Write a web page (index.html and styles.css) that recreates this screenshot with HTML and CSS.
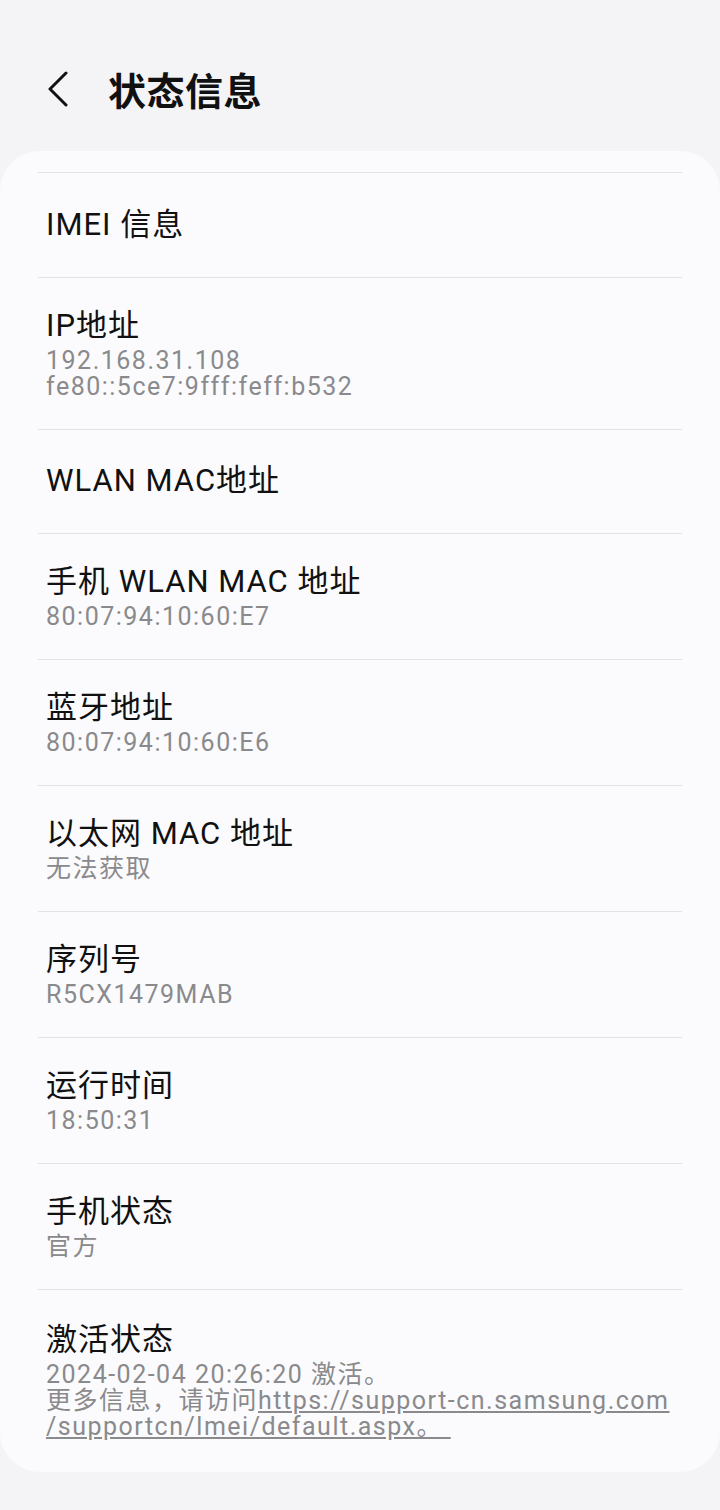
FILE: index.html
```html
<!DOCTYPE html>
<html lang="zh-CN">
<head>
  <meta charset="UTF-8" />
  <meta name="viewport" content="width=device-width, initial-scale=1" />
  <title>状态信息</title>
  <link rel="stylesheet" href="styles.css">
</head>
<body>
<header class="topbar">
  <button class="back-btn" aria-label="返回">
    <svg width="24" height="36" viewBox="0 0 24 36">
      <path d="M20 2 L4 18 L20 34" fill="none" stroke="#111" stroke-width="3" stroke-linecap="round" stroke-linejoin="round"/>
    </svg>
  </button>
  <h1>状态信息</h1>
</header>

<main class="card">
  <div class="row single">
    <div class="title">IMEI 信息</div>
  </div>
  <div class="row">
    <div class="title">IP地址</div>
    <div class="sub">192.168.31.108<br>fe80::5ce7:9fff:feff:b532</div>
  </div>
  <div class="row single">
    <div class="title">WLAN MAC地址</div>
  </div>
  <div class="row">
    <div class="title">手机 WLAN MAC 地址</div>
    <div class="sub">80:07:94:10:60:E7</div>
  </div>
  <div class="row">
    <div class="title">蓝牙地址</div>
    <div class="sub">80:07:94:10:60:E6</div>
  </div>
  <div class="row">
    <div class="title">以太网 MAC 地址</div>
    <div class="sub">无法获取</div>
  </div>
  <div class="row">
    <div class="title">序列号</div>
    <div class="sub">R5CX1479MAB</div>
  </div>
  <div class="row">
    <div class="title">运行时间</div>
    <div class="sub">18:50:31</div>
  </div>
  <div class="row">
    <div class="title">手机状态</div>
    <div class="sub">官方</div>
  </div>
  <div class="row last">
    <div class="title">激活状态</div>
    <div class="sub">2024-02-04 20:26:20 激活。<br>更多信息，请访问<a href="#">https://support-cn.samsung.com<br>/supportcn/lmei/default.aspx。 </a></div>
  </div>
</main>
</body>
</html>
```

FILE: styles.css
```css
* { box-sizing: border-box; }
body {
  margin: 0;
  background: #f4f4f6;
  color: #111;
  font-family: Roboto, "Noto Sans CJK SC", sans-serif;
}
.topbar {
  display: flex;
  align-items: center;
  height: 151px;
  padding: 27px 0 0 46px;
}
.back-btn {
  background: none;
  border: none;
  padding: 0;
  margin: 0 38px 0 0;
  width: 24px;
  height: 36px;
  display: flex;
}
.topbar h1 {
  margin: 0;
  font-size: 38px;
  font-weight: 700;
  letter-spacing: 0.5px;
  padding-bottom: 2px;
}
.card {
  background: #fbfbfd;
  border-radius: 40px;
  padding: 21px 38px 32px;
}
.row {
  border-top: 1px solid #e3e3e5;
  padding: 28px 8px 29px;
}
.row.single {
  min-height: 104.5px;
  display: flex;
  align-items: center;
  padding: 0 8px;
}
.row.last {
  padding: 30px 8px 0;
}
.title {
  font-size: 31px;
  line-height: 40px;
  letter-spacing: 1px;
  color: #111;
}
.sub {
  margin-top: 2px;
  font-size: 25px;
  line-height: 26px;
  color: #8a8a8c;
  letter-spacing: 1.5px;
}
.sub a {
  color: #8a8a8c;
  text-decoration: underline;
  white-space: pre;
}
```
